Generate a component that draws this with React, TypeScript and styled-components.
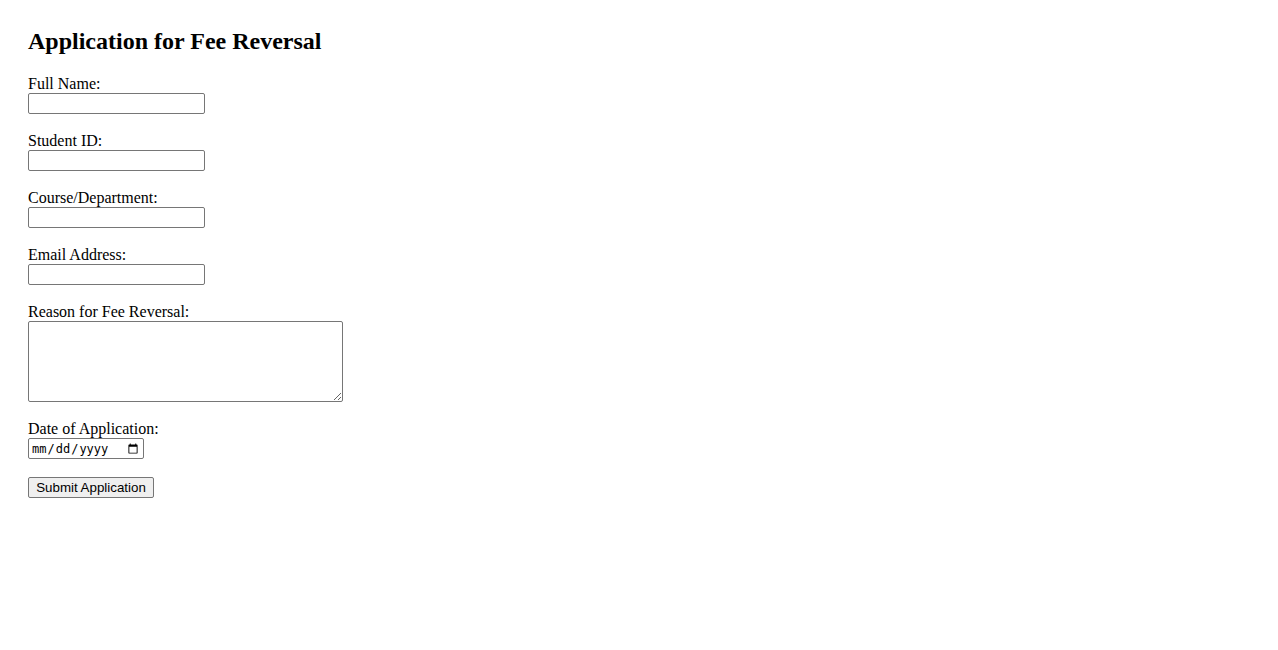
import React from "react";
import styled, { createGlobalStyle } from "styled-components";

const GlobalStyle = createGlobalStyle`
  html, body {
    margin: 0;
    padding: 0;
    background: #ffffff;
  }
  body {
    font-family: "Liberation Serif", "Times New Roman", serif;
    font-size: 16px;
    color: #000000;
  }
`;

const Page = styled.div`
  padding: 28px;
`;

const Title = styled.h2`
  margin: 0 0 20px 0;
  font-size: 24px;
  line-height: 27px;
  font-weight: bold;
`;

const Form = styled.form`
  display: flex;
  flex-direction: column;
  align-items: flex-start;
  gap: 18px;
`;

const Field = styled.div`
  display: flex;
  flex-direction: column;
  align-items: flex-start;
`;

const Label = styled.label`
  display: block;
  line-height: 18px;
  height: 18px;
`;

const controlBase = `
  box-sizing: border-box;
  border: 1px solid #767676;
  border-radius: 2px;
  background: #ffffff;
  margin: 0;
  font-family: "Liberation Sans", Arial, sans-serif;
  font-size: 13.33px;
  color: #000000;
`;

const TextInput = styled.input<{ $w?: number }>`
  ${controlBase}
  display: block;
  width: ${(p) => p.$w ?? 177}px;
  height: 21px;
  padding: 1px 2px;
`;

const DateInput = styled.input`
  ${controlBase}
  display: block;
  width: 116px;
  height: 21px;
  padding: 0 2px 0 2px;
  font-family: "DejaVu Sans Mono", "Liberation Mono", monospace;
  font-size: 12px;
`;

const TextArea = styled.textarea`
  ${controlBase}
  display: block;
  width: 315px;
  height: 81px;
  padding: 2px;
  font-family: "Liberation Mono", monospace;
`;

const SubmitButton = styled.button`
  box-sizing: border-box;
  height: 21px;
  width: 126px;
  padding: 1px 6px;
  margin: 0;
  border: 1px solid #767676;
  border-radius: 2px;
  background: #efefef;
  font-family: "Liberation Sans", Arial, sans-serif;
  font-size: 13.33px;
  color: #000000;
  line-height: 17px;
`;

const fields = [
  { id: "fullName", label: "Full Name:", type: "text" },
  { id: "studentId", label: "Student ID:", type: "text" },
  { id: "course", label: "Course/Department:", type: "text" },
  { id: "email", label: "Email Address:", type: "email" },
];

export default function App() {
  return (
    <>
      <GlobalStyle />
      <Page>
        <Title>Application for Fee Reversal</Title>
        <Form onSubmit={(e) => e.preventDefault()}>
          {fields.map((f) => (
            <Field key={f.id}>
              <Label htmlFor={f.id}>{f.label}</Label>
              <TextInput id={f.id} type={f.type} />
            </Field>
          ))}
          <Field>
            <Label htmlFor="reason">Reason for Fee Reversal:</Label>
            <TextArea id="reason" />
          </Field>
          <Field>
            <Label htmlFor="date">Date of Application:</Label>
            <DateInput id="date" type="date" />
          </Field>
          <SubmitButton type="submit">Submit Application</SubmitButton>
        </Form>
      </Page>
    </>
  );
}
